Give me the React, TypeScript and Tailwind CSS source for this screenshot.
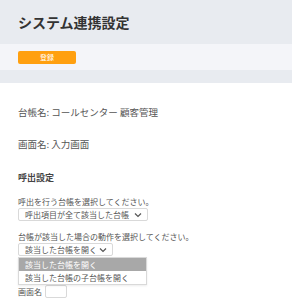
const font = { fontFamily: '"Noto Sans CJK JP", "Noto Sans", sans-serif' };

function Chevron() {
  return (
    <svg width="8" height="6" viewBox="0 0 8 6" className="shrink-0">
      <path d="M1 1.5 L4 4.5 L7 1.5" fill="none" stroke="#555" strokeWidth="1.2" />
    </svg>
  );
}

function SelectBox({ value, width }: { value: string; width: string }) {
  return (
    <div
      className={`${width} h-[13px] flex items-center justify-between border border-[#d9d9d9] rounded-[2px] bg-white pl-[6px] pr-[5px] text-[8px] leading-[11px] text-[#555]`}
    >
      <span>{value}</span>
      <Chevron />
    </div>
  );
}

export default function App() {
  const options = ['該当した台帳を開く', '該当した台帳の子台帳を開く'];

  return (
    <div className="w-[292px] h-[300px] overflow-hidden bg-[#e8ebf0]" style={font}>
      {/* Header */}
      <div className="h-[44px] flex items-center px-[18px]">
        <h1 className="text-[14px] font-bold text-[#333] leading-none">システム連携設定</h1>
      </div>

      {/* Toolbar */}
      <div className="h-[26px] bg-[#f4f5f9] flex items-center px-[18px]">
        <button className="w-[58px] h-[13px] rounded-[2px] bg-[#ffa010] text-white text-[7px] leading-none flex items-center justify-center">
          登録
        </button>
      </div>

      <div className="h-[13px]" />

      {/* Content */}
      <div className="bg-white h-[217px] px-[18px] pt-[23px] text-[#555]">
        <p className="text-[9.5px] leading-[12px]">台帳名: コールセンター 顧客管理</p>
        <p className="mt-[20px] text-[9.5px] leading-[12px]">画面名: 入力画面</p>

        <h2 className="mt-[22px] text-[9px] leading-[12px] font-bold text-[#444]">呼出設定</h2>

        <p className="mt-[13px] text-[8px] leading-[10px]">呼出を行う台帳を選択してください。</p>
        <div className="mt-[1px]">
          <SelectBox value="呼出項目が全て該当した台帳" width="w-[130px]" />
        </div>

        <p className="mt-[11px] text-[8px] leading-[10px]">台帳が該当した場合の動作を選択してください。</p>
        <div className="relative mt-[1px]">
          <SelectBox value="該当した台帳を開く" width="w-[95px]" />
          <ul className="absolute left-0 top-[14px] w-[129px] z-10 bg-white border border-[#d9d9d9] text-[8px] leading-[10px] shadow-[0_1px_2px_rgba(0,0,0,0.08)]">
            {options.map((opt, i) => (
              <li
                key={opt}
                className={`h-[13px] flex items-center px-[6px] ${i === 0 ? 'bg-[#a8a8a8] text-white' : 'text-[#555]'}`}
              >
                {opt}
              </li>
            ))}
          </ul>
        </div>

        <div className="mt-[29px] flex items-center gap-[3px] text-[8px] leading-[10px]">
          <span>画面名</span>
          <div className="w-[22px] h-[13px] border border-[#d9d9d9] rounded-[2px]" />
        </div>
      </div>
    </div>
  );
}
